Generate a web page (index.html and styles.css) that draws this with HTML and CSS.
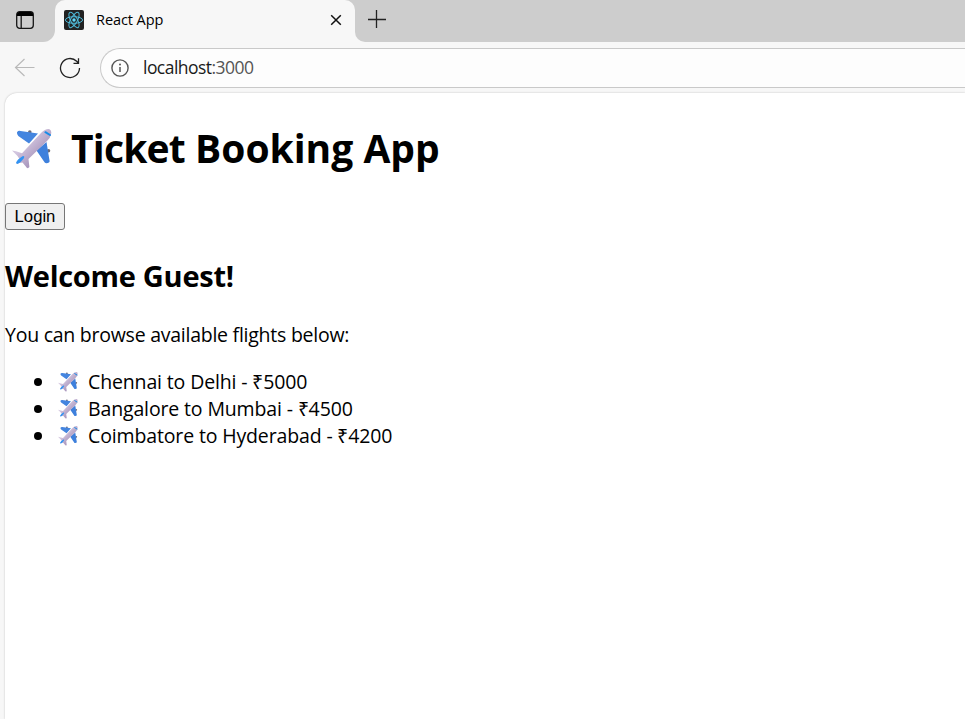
FILE: index.html
```html
<!DOCTYPE html>
<html lang="en">
<head>
<meta charset="utf-8">
<title>React App</title>
<link rel="stylesheet" href="styles.css">
</head>
<body>
<svg width="0" height="0" class="defs" aria-hidden="true">
  <defs>
    <linearGradient id="body" x1="0" y1="0" x2="1" y2="1">
      <stop offset=".35" stop-color="#d3c6df"/><stop offset=".68" stop-color="#aa98be"/>
    </linearGradient>
    <symbol id="plane" viewBox="0 0 40 40">
      <circle cx="17.800" cy="3" r="1.800" fill="#6c6b78"/><circle cx="36.500" cy="21.700" r="1.800" fill="#6c6b78"/>
      <path d="M5 3.300Q6 1.500 8.500 1.900L26 4.600 17 14.500 6.300 7Q4.700 5.500 5 3.300Z" fill="#4485df"/>
      <path d="M34.500 13L37.600 32Q37.700 34 34.500 34.200 32.800 34.400 32 32.500L24.500 21.500Z" fill="#3e80dc"/>
      <path d="M0 21.600L4 22.300 10 24.200 29 4Q33.500-.5 37.500.2 40 1.200 39 5.500 38.500 8.500 35 12L16.500 30 17.400 38Q15.500 40.500 13.800 37.500L10.500 33.500 4 34.500 7.500 30 5.500 27Z" fill="url(#body)"/>
      <path d="M4 34Q5 30.500 10.500 27.200 13 26.500 12 29 8.500 34 5.300 35Z" fill="#3193f3"/>
      <path d="M33.400 3.200L38 6" stroke="#168ce8" stroke-width="2" stroke-linecap="round"/>
    </symbol>
  </defs>
</svg>
<div class="browser">
  <header class="tabs">
    <div class="tab-menu">
      <svg width="20" height="20" viewBox="0 0 20 20"><rect x="1.700" y="1.700" width="16.600" height="16.600" rx="3" fill="none" stroke="#151515" stroke-width="1.300"/><path d="M2 6V4a2 2 0 0 1 2-2h12a2 2 0 0 1 2 2v2z" fill="#000"/><path d="M6.200 6v12" stroke="#151515" stroke-width="1.300"/></svg>
    </div>
    <div class="tab">
      <svg width="20" height="20" viewBox="0 0 20 20"><rect width="20" height="20" rx="2" fill="#222"/><g fill="none" stroke="#4fb9d8" stroke-width="1"><ellipse cx="10" cy="10" rx="8.600" ry="3.300"/><ellipse cx="10" cy="10" rx="8.600" ry="3.300" transform="rotate(60 10 10)"/><ellipse cx="10" cy="10" rx="8.600" ry="3.300" transform="rotate(120 10 10)"/></g><circle cx="10" cy="10" r="1.700" fill="#61dafb"/></svg>
      <span class="tab-title">React App</span>
      <svg class="close" width="12" height="12" viewBox="0 0 12 12"><path d="M1.200 1.200l9.600 9.600M10.800 1.200l-9.600 9.600" stroke="#111" stroke-width="1.500"/></svg>
    </div>
    <div class="new-tab">
      <svg width="18" height="18" viewBox="0 0 18 18"><path d="M0 9.500h18M8.500 0v18" stroke="#222" stroke-width="1.300"/></svg>
    </div>
  </header>
  <nav class="toolbar">
    <svg class="back" width="22" height="20" viewBox="0 0 22 20"><path d="M20.500 9.500H1.500M10.500 1L1.500 9.500l9 8.500" fill="none" stroke="#b9b9b9" stroke-width="1.200"/></svg>
    <svg class="reload" width="22" height="22" viewBox="0 0 22 22"><path d="M20.500 11A9.500 9.500 0 1 1 17.700 4.300L19.300 6M19.500 1.300V6.300H14.500" fill="none" stroke="#222" stroke-width="1.300"/></svg>
    <div class="address">
      <svg width="18" height="18" viewBox="0 0 18 18"><circle cx="9" cy="9" r="8.100" fill="none" stroke="#555" stroke-width="1.400"/><path d="M9 8v5" stroke="#555" stroke-width="1.500"/><circle cx="9" cy="5.500" r="1" fill="#555"/></svg>
      <span class="url">localhost<span class="port">:3000</span></span>
    </div>
  </nav>
  <main class="page">
    <h1><svg class="plane-large"><use href="#plane"/></svg><span><span class="lead">Ticket</span> Booking App</span></h1>
    <button class="login">Login</button>
    <h2>Welcome Guest!</h2>
    <p>You can browse available flights below:</p>
    <ul>
      <li><svg class="plane-small"><use href="#plane"/></svg><span>Chennai to Delhi - ₹5000</span></li>
      <li><svg class="plane-small"><use href="#plane"/></svg><span>Bangalore to Mumbai - ₹4500</span></li>
      <li><svg class="plane-small"><use href="#plane"/></svg><span>Coimbatore to Hyderabad - ₹4200</span></li>
    </ul>
  </main>
</div>
</body>
</html>
```
FILE: styles.css
```css
* { box-sizing: border-box; }
body { margin: 0; font-family: "Segoe UI", "Open Sans", sans-serif; color: #000; background: #f7f7f7; overflow: hidden; }
svg { flex: none; display: block; }
.defs { position: absolute; }
.browser { height: 719px; display: flex; flex-direction: column; white-space: nowrap; }
.tabs { display: flex; height: 42px; flex: none; background: #f7f7f7; }
.tab-menu { width: 55px; background: #cdcdcd; border-bottom-right-radius: 12px; padding: 10px 0 0 15px; }
.tab { width: 300px; display: flex; align-items: center; padding: 0 13px 2px 9px; background: linear-gradient(#cdcdcd, #cdcdcd) top / 100% 12px no-repeat; position: relative; z-index: 0; }
.tab::before { content: ""; position: absolute; inset: 0; border-radius: 10px 10px 0 0; background: #f7f7f7; z-index: -1; }
.tab-title { margin-left: 12px; font-size: 14.500px; line-height: 20px; letter-spacing: -.07px; }
.close { margin-left: auto; }
.new-tab { flex: 1; background: #cdcdcd; border-bottom-left-radius: 10px; padding: 10px 0 0 13px; }
.toolbar { display: flex; height: 51px; flex: none; align-items: center; padding-left: 14px; }
.reload { margin-left: 23px; }
.address { flex: 1; align-self: flex-start; display: flex; align-items: center; margin-left: 19px; margin-top: 6px; height: 40px; border: 1px solid #c9c9c9; border-width: 1.500px 0 1.500px 1.500px; border-radius: 20px 0 0 20px; background: #fdfdfd; padding-left: 10px; }
.url { margin-left: 14px; padding-bottom: 2px; font-size: 17.500px; letter-spacing: -.54px; color: #1a1a1a; }
.port { color: #555; }
.page { flex: 1; margin-left: 5px; background: #fff; border-radius: 12px 0 0 0; box-shadow: 0 0 2px #bbb; }
h1 { display: flex; margin: 0; padding: 28px 0 0 7px; font-size: 39px; line-height: 53px; }
.lead { letter-spacing: -.8px; }
.plane-large { width: 40px; height: 40px; margin: 8px 19px 0 0; }
.login { display: block; margin: 29px 0 0; width: 60px; height: 27px; padding: 0; border: 1px solid #767676; border-radius: 3px; background: #efefef; font: 16.667px "Liberation Sans", sans-serif; color: #000; }
h2 { margin: 26px 0 0; font-size: 29px; line-height: 40px; letter-spacing: -.27px; }
p { margin: 25px 0 0; font-size: 19.500px; line-height: 27px; letter-spacing: -.25px; }
ul { list-style: none; margin: 20px 0 0; padding: 0 0 0 29px; font-size: 19.500px; line-height: 27px; letter-spacing: -.14px; }
li { display: flex; align-items: center; }
li::before { content: ""; width: 8px; height: 8px; border-radius: 50%; background: #000; margin-right: 16px; }
.plane-small { width: 20px; height: 20px; margin-right: 10px; }
```
